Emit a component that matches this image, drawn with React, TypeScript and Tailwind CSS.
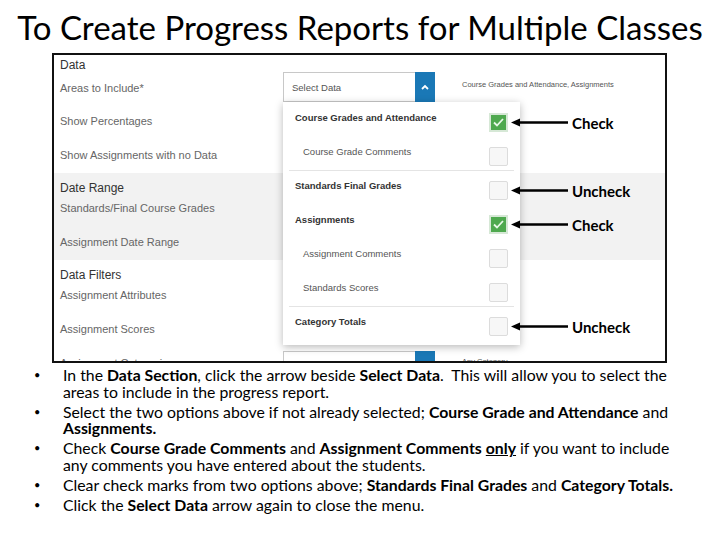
import React from "react";

const ui: React.CSSProperties = { fontFamily: '"Liberation Sans", Arial, sans-serif' };
const doc: React.CSSProperties = { fontFamily: 'Lato, "Open Sans", sans-serif' };

function Chevron({ dir }: { dir: "up" | "down" }) {
  return (
    <svg width="8" height="6" viewBox="0 0 8 6">
      <path
        d={dir === "up" ? "M1 5 L4 2 L7 5" : "M1 1 L4 4 L7 1"}
        stroke="white"
        strokeWidth="1.8"
        fill="none"
      />
    </svg>
  );
}

function CheckBox({ checked }: { checked?: boolean }) {
  if (checked) {
    return (
      <span className="flex h-[19px] w-[19px] items-center justify-center border-2 border-[#d6e8d6] bg-[#4fa94f]">
        <svg width="11" height="9" viewBox="0 0 11 9">
          <path d="M1 4.5 L4 7.5 L10 1" stroke="#e8f8e8" strokeWidth="1.8" fill="none" />
        </svg>
      </span>
    );
  }
  return <span className="block h-[19px] w-[19px] rounded-[2px] border border-[#dcdcdc] bg-[#f7f7f7]" />;
}

function Note({ label }: { label: string }) {
  return (
    <div className="absolute left-[22px] top-1/2 flex -translate-y-1/2 items-center gap-[4px]">
      <svg width="57" height="10" viewBox="0 0 57 10">
        <path d="M0 5 L9 1 L9 9 Z" fill="black" />
        <rect x="8" y="3.75" width="49" height="2.5" fill="black" />
      </svg>
      <span className="whitespace-nowrap text-[15px] font-bold leading-none text-black" style={doc}>
        {label}
      </span>
    </div>
  );
}

type Item = { label: string; bold?: boolean; checked?: boolean; note?: string; sep?: boolean };

const items: Item[] = [
  { label: "Course Grades and Attendance", bold: true, checked: true, note: "Check" },
  { label: "Course Grade Comments" },
  { label: "Standards Final Grades", bold: true, note: "Uncheck", sep: true },
  { label: "Assignments", bold: true, checked: true, note: "Check" },
  { label: "Assignment Comments" },
  { label: "Standards Scores" },
  { label: "Category Totals", bold: true, note: "Uncheck", sep: true },
];

function Menu() {
  return (
    <div className="absolute left-0 top-full z-10 w-[237px] bg-white pb-[5px] shadow-[0_2px_8px_rgba(0,0,0,0.28)]">
      {items.map((it) => (
        <div key={it.label} className={it.sep ? "mx-[6px] border-t border-[#e4e4e4]" : "mx-[6px]"}>
          <div className={`flex h-[34px] items-start justify-between pr-[6px] ${it.sep ? "-mt-px" : ""} ${it.bold ? "pl-[6px]" : "pl-[14px]"}`}>
            <span
              className={`pt-[8px] text-[9.5px] leading-[16px] ${it.bold ? "font-bold text-[#333]" : "text-[#555]"}`}
            >
              {it.label}
            </span>
            <span className="relative mt-[11px]">
              <CheckBox checked={it.checked} />
              {it.note && <Note label={it.note} />}
            </span>
          </div>
        </div>
      ))}
    </div>
  );
}

function SelectBox({ dir, text, children }: { dir: "up" | "down"; text: string; children?: React.ReactNode }) {
  return (
    <div className="relative h-[30px] w-[152px]">
      <div className="flex h-full items-stretch">
        <span className="flex flex-1 items-center border-y border-l border-[#c8c8c8] bg-white pl-[8px] pt-[2px] text-[9.5px] text-[#555]">
          {text}
        </span>
        <span className="flex w-[20px] items-center justify-center bg-[#1a78b6]">
          <Chevron dir={dir} />
        </span>
      </div>
      {children}
    </div>
  );
}

function Row({ label, h = "h-[34px]" }: { label: string; h?: string }) {
  return (
    <div className={`flex ${h} items-start`}>
      <div className="w-[229px] pl-[6px] text-[11px] leading-[20px] text-[#666]">{label}</div>
    </div>
  );
}

function Header({ label }: { label: string }) {
  return <div className="h-[20px] pl-[6px] text-[12px] leading-[20px] text-[#333]">{label}</div>;
}

function Screen() {
  return (
    <div className="ml-[52px] h-[310px] w-[615px] overflow-hidden border-2 border-[#111] bg-white" style={ui}>
      <div className="h-[118px]">
        <Header label="Data" />
        <div className="flex h-[36px] items-start">
          <div className="w-[229px] pl-[6px] pt-[3px] text-[11px] leading-[20px] text-[#666]">Areas to Include*</div>
          <div className="-mt-[3px] flex items-start">
            <SelectBox dir="up" text="Select Data">
              <Menu />
            </SelectBox>
            <span className="ml-[27px] pt-[7px] text-[7.5px] text-[#555]">
              Course Grades and Attendance, Assignments
            </span>
          </div>
        </div>
        <Row label="Show Percentages" />
        <Row label="Show Assignments with no Data" h="h-[28px]" />
      </div>
      <div className="h-[87px] bg-[#f2f2f2] pt-[5px]">
        <Header label="Date Range" />
        <Row label="Standards/Final Course Grades" />
        <Row label="Assignment Date Range" />
      </div>
      <div className="pt-[5px]">
        <Header label="Data Filters" />
        <Row label="Assignment Attributes" />
        <Row label="Assignment Scores" />
        <div className="flex h-[34px] items-start">
          <div className="w-[229px] pl-[6px] text-[11px] leading-[20px] text-[#666]">Assignment Categories</div>
          <div className="-mt-[2px] flex items-start">
            <SelectBox dir="down" text="Select Data" />
            <span className="ml-[27px] pt-[5px] text-[7.5px] text-[#555]">Any Category</span>
          </div>
        </div>
      </div>
    </div>
  );
}

function B({ children }: { children: React.ReactNode }) {
  return <span className="font-bold">{children}</span>;
}

function Bullet({ children }: { children: React.ReactNode }) {
  return (
    <li className="flex items-start">
      <span className="w-[63px] shrink-0 pl-[34px] text-[11px] leading-[16.5px]">•</span>
      <span className="whitespace-nowrap text-[15.8px] leading-[16.5px] text-black">{children}</span>
    </li>
  );
}

export default function App() {
  return (
    <div className="h-[540px] w-[720px] bg-white">
      <h1 className="flex h-[53px] items-center justify-center pt-[2px] text-[33px] text-black" style={doc}>
        To Create Progress Reports for Multiple Classes
      </h1>
      <Screen />
      <ul className="mt-[4px] flex flex-col gap-[3.5px]" style={doc}>
        <Bullet>
          In the <B>Data Section</B>, click the arrow beside <B>Select Data</B>.&nbsp; This will allow you to select the
          <br />
          areas to include in the progress report.
        </Bullet>
        <Bullet>
          Select the two options above if not already selected; <B>Course Grade and Attendance</B> and
          <br />
          <B>Assignments.</B>
        </Bullet>
        <Bullet>
          Check <B>Course Grade Comments</B> and <B>Assignment Comments</B>{" "}
          <span className="font-bold underline">only</span> if you want to include
          <br />
          any comments you have entered about the students.
        </Bullet>
        <Bullet>
          Clear check marks from two options above; <B>Standards Final Grades</B> and <B>Category Totals.</B>
        </Bullet>
        <Bullet>
          Click the <B>Select Data</B> arrow again to close the menu.
        </Bullet>
      </ul>
    </div>
  );
}
